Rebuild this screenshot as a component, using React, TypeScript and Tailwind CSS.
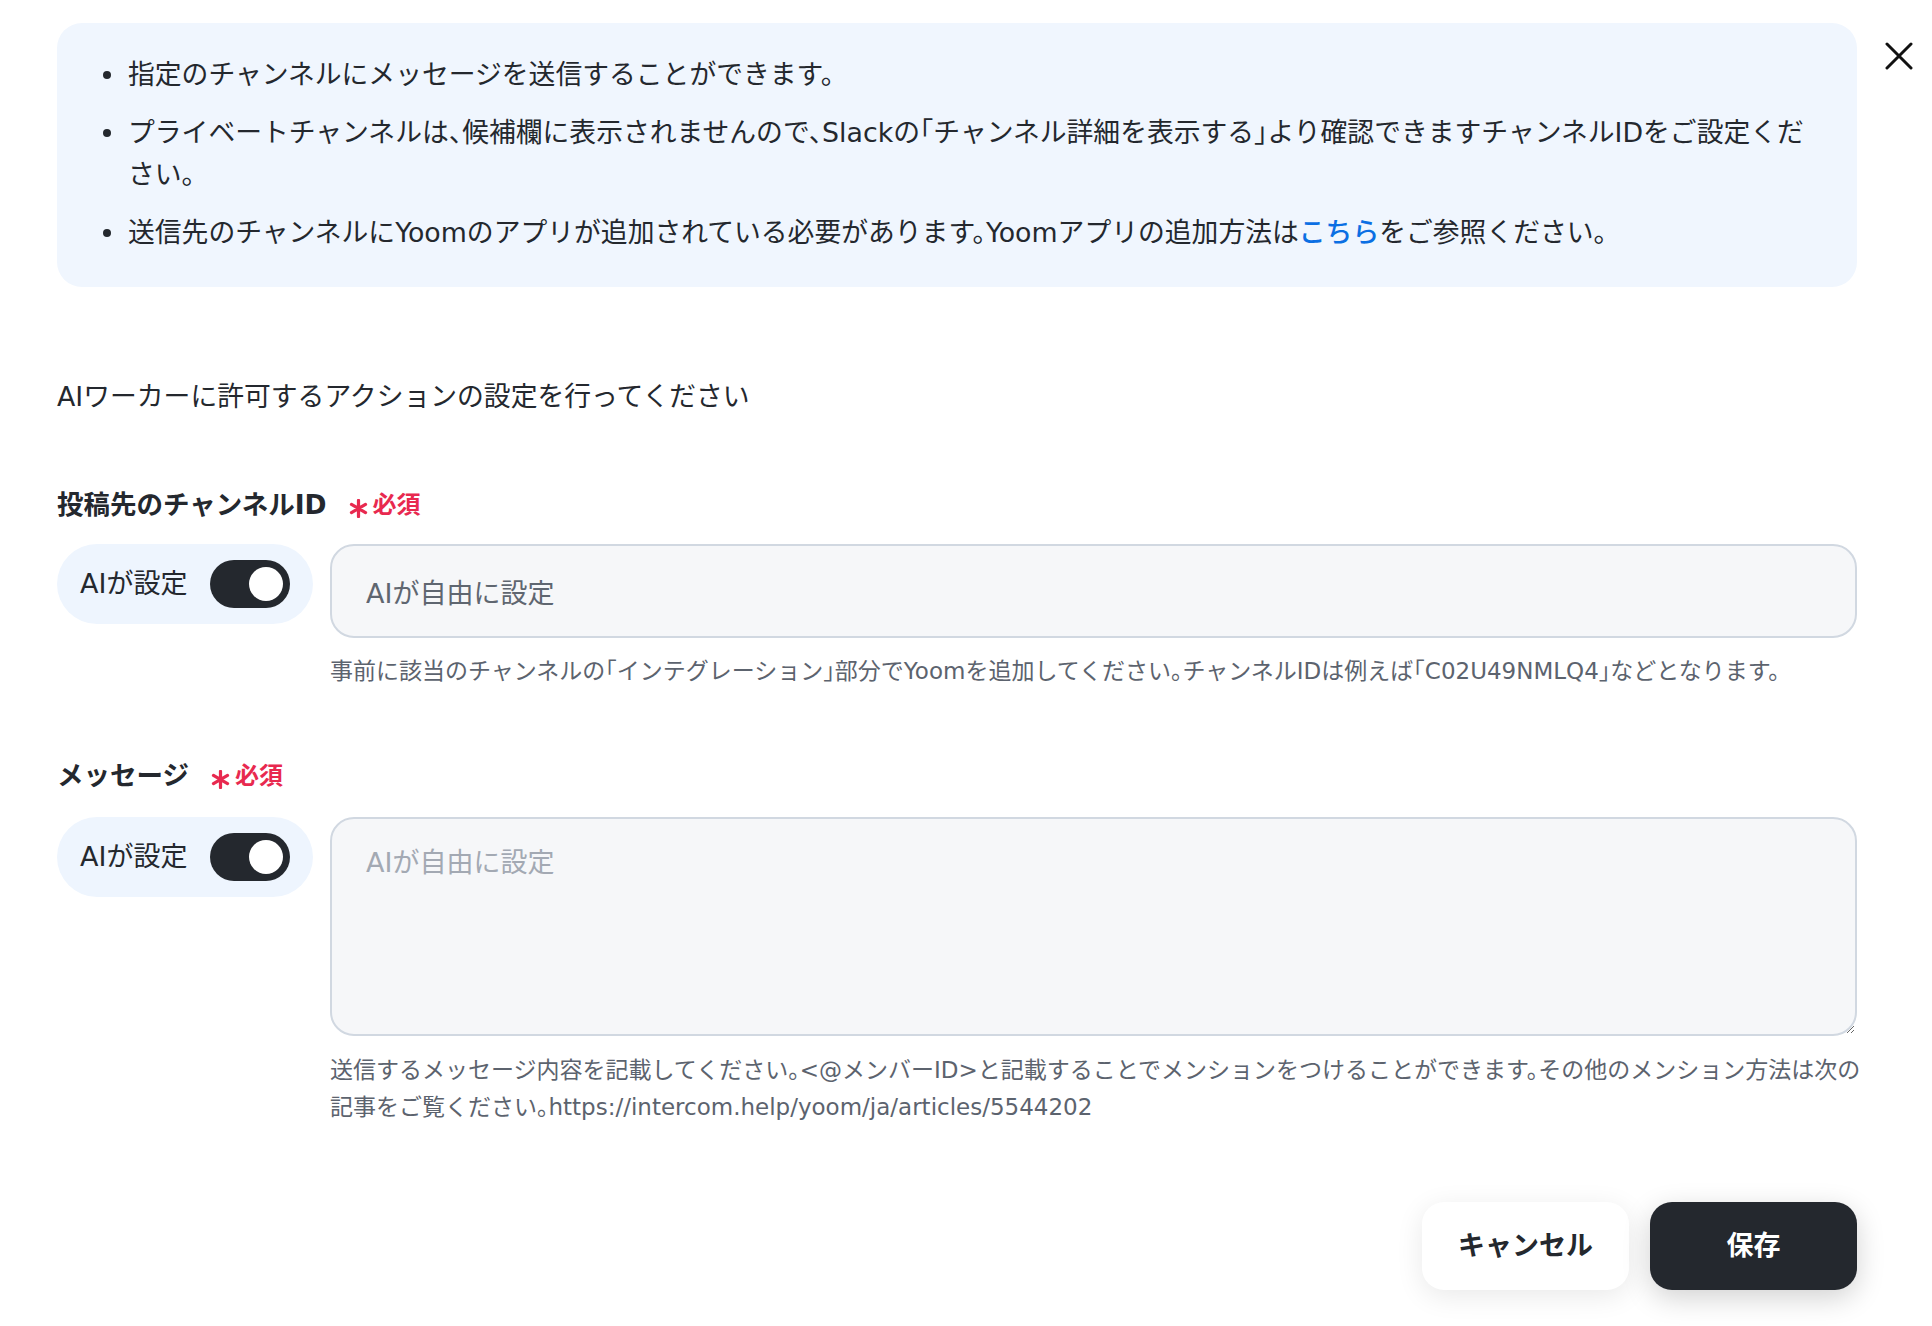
import React from "react";

const FONT = `"DejaVu Sans", "Noto Sans CJK JP", sans-serif`;

function Required() {
  return (
    <span className="flex items-center gap-[5px] font-bold text-[#e8294f]">
      <svg viewBox="0 0 20 20" width="19" height="19" className="relative top-[3px]" stroke="#e8294f" strokeWidth="3.4" strokeLinecap="round">
        <path d="M10 1.5v17M2.6 5.75l14.8 8.5M2.6 14.25l14.8-8.5" />
      </svg>
      <span className="text-[24px] leading-[36px]">必須</span>
    </span>
  );
}

function AiToggle() {
  return (
    <div className="flex h-[80px] w-[256px] shrink-0 items-center justify-between rounded-full bg-[#eef5fe] px-[23px]">
      <span className="text-[27px] text-[#24282e]">AIが設定</span>
      <span className="flex h-[48px] w-[80px] items-center justify-end rounded-full bg-[#24282e] pr-[7px]">
        <span className="h-[34px] w-[34px] rounded-full bg-white" />
      </span>
    </div>
  );
}

function Bullet({ children }: { children: React.ReactNode }) {
  return (
    <li className="flex items-start gap-[17px]">
      <span className="mt-[17px] h-[8px] w-[8px] shrink-0 rounded-full bg-[#24282e]" />
      <span className="whitespace-nowrap">{children}</span>
    </li>
  );
}

export default function App() {
  return (
    <div
      className="relative min-h-[1326px] w-full bg-white text-[#24282e] [font-feature-settings:'halt']"
      style={{ fontFamily: FONT }}
    >
      <button className="absolute right-[19px] top-[42px] h-[28px] w-[28px]" aria-label="閉じる">
        <svg viewBox="0 0 28 28" width="28" height="28" fill="none" stroke="#111" strokeWidth="3" strokeLinecap="round">
          <path d="M2 2 26 26M26 2 2 26" />
        </svg>
      </button>

      <div className="pl-[57px] pr-[75px] pt-[23px]">
        {/* notes */}
        <ul className="flex flex-col gap-[16px] rounded-[25px] bg-[#f0f6fe] pb-[33px] pl-[46px] pr-[20px] pt-[31px] text-[26.8px] leading-[42px]">
          <Bullet>指定のチャンネルにメッセージを送信することができます。</Bullet>
          <Bullet>
            プライベートチャンネルは、候補欄に表示されませんので、Slackの「チャンネル詳細を表示する」より確認できますチャンネルIDをご設定くだ
            <br />
            さい。
          </Bullet>
          <Bullet>
            送信先のチャンネルにYoomのアプリが追加されている必要があります。Yoomアプリの追加方法は
            <a className="font-medium text-[#0b6fe3]">こちら</a>
            をご参照ください。
          </Bullet>
        </ul>

        <p className="mt-[90px] text-[26.8px] leading-[40px]">AIワーカーに許可するアクションの設定を行ってください</p>

        {/* channel id */}
        <div className="mt-[70px] flex items-center gap-[22px]">
          <span className="text-[26.5px] font-bold leading-[36px]">投稿先のチャンネルID</span>
          <Required />
        </div>
        <div className="mt-[21px] flex items-start gap-[17px]">
          <AiToggle />
          <div className="flex min-w-0 flex-1 flex-col">
            <input
              readOnly
              defaultValue="AIが自由に設定"
              className="h-[94px] w-full rounded-[24px] border-2 border-[#d1d8e1] bg-[#f6f7f9] px-[34px] text-[27px] text-[#5f6670] outline-none"
            />
            <p className="mt-[15px] whitespace-nowrap text-[23px] leading-[37px] text-[#5c636e]">
              事前に該当のチャンネルの「インテグレーション」部分でYoomを追加してください。チャンネルIDは例えば「C02U49NMLQ4」などとなります。
            </p>
          </div>
        </div>

        {/* message */}
        <div className="mt-[68px] flex items-center gap-[22px]">
          <span className="text-[26.5px] font-bold leading-[36px]">メッセージ</span>
          <Required />
        </div>
        <div className="mt-[23px] flex items-start gap-[17px]">
          <AiToggle />
          <div className="flex min-w-0 flex-1 flex-col">
            <textarea
              placeholder="AIが自由に設定"
              className="h-[219px] w-full rounded-[24px] border-2 border-[#d1d8e1] bg-[#f6f7f9] px-[34px] pt-[26px] text-[27px] leading-[36px] text-[#24282e] outline-none placeholder:text-[#a3a9b3]"
            />
            <p className="mt-[16px] whitespace-nowrap text-[23px] leading-[37px] text-[#5c636e]">
              送信するメッセージ内容を記載してください。&lt;@メンバーID&gt;と記載することでメンションをつけることができます。その他のメンション方法は次の
              <br />
              記事をご覧ください。https://intercom.help/yoom/ja/articles/5544202
            </p>
          </div>
        </div>

        {/* actions */}
        <div className="mt-[76px] flex justify-end gap-[21px]">
          <button className="h-[88px] w-[207px] rounded-[22px] bg-white text-[27px] font-bold text-[#24282e] shadow-[0_6px_28px_rgba(0,0,0,0.09)]">
            キャンセル
          </button>
          <button className="h-[88px] w-[207px] rounded-[22px] bg-[#24282e] text-[27px] font-bold text-white shadow-[0_8px_28px_rgba(0,0,0,0.18)]">
            保存
          </button>
        </div>
      </div>
    </div>
  );
}
